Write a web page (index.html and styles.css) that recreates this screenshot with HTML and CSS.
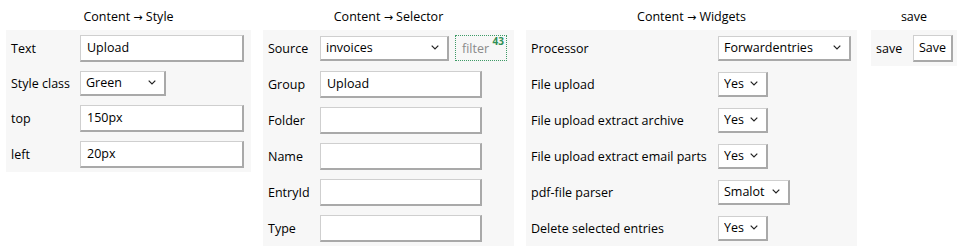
FILE: index.html
```html
<!DOCTYPE html>
<html lang="en">
<head>
  <meta charset="UTF-8">
  <title>Content editor</title>
  <link rel="stylesheet" href="styles.css">
</head>
<body>
  <div class="editor">
    <!-- Style -->
    <section class="panel panel-style">
      <div class="panel-title">Content <span class="arrow">→</span> Style</div>
      <table class="fields">
        <tr>
          <td class="label">Text</td>
          <td><input class="field" type="text" value="Upload"></td>
        </tr>
        <tr class="compact">
          <td class="label">Style class</td>
          <td>
            <select class="choice choice-green">
              <option>Green</option>
            </select>
          </td>
        </tr>
        <tr>
          <td class="label">top</td>
          <td><input class="field" type="text" value="150px"></td>
        </tr>
        <tr>
          <td class="label">left</td>
          <td><input class="field" type="text" value="20px"></td>
        </tr>
      </table>
    </section>

    <!-- Selector -->
    <section class="panel panel-selector">
      <div class="panel-title">Content <span class="arrow">→</span> Selector</div>
      <table class="fields">
        <tr>
          <td class="label">Source</td>
          <td>
            <div class="source-row">
              <select class="choice choice-source">
                <option>invoices</option>
              </select>
              <span class="filter">filter<sup class="count">43</sup></span>
            </div>
          </td>
        </tr>
        <tr>
          <td class="label">Group</td>
          <td><input class="field" type="text" value="Upload"></td>
        </tr>
        <tr>
          <td class="label">Folder</td>
          <td><input class="field" type="text" value=""></td>
        </tr>
        <tr>
          <td class="label">Name</td>
          <td><input class="field" type="text" value=""></td>
        </tr>
        <tr>
          <td class="label">EntryId</td>
          <td><input class="field" type="text" value=""></td>
        </tr>
        <tr>
          <td class="label">Type</td>
          <td><input class="field" type="text" value=""></td>
        </tr>
      </table>
    </section>

    <!-- Widgets -->
    <section class="panel panel-widgets">
      <div class="panel-title">Content <span class="arrow">→</span> Widgets</div>
      <table class="fields">
        <tr>
          <td class="label">Processor</td>
          <td><select class="choice choice-processor"><option>Forwardentries</option></select></td>
        </tr>
        <tr>
          <td class="label">File upload</td>
          <td><select class="choice choice-yes"><option>Yes</option></select></td>
        </tr>
        <tr>
          <td class="label">File upload extract archive</td>
          <td><select class="choice choice-yes"><option>Yes</option></select></td>
        </tr>
        <tr>
          <td class="label">File upload extract email parts</td>
          <td><select class="choice choice-yes"><option>Yes</option></select></td>
        </tr>
        <tr>
          <td class="label">pdf-file parser</td>
          <td><select class="choice choice-parser"><option>Smalot</option></select></td>
        </tr>
        <tr>
          <td class="label">Delete selected entries</td>
          <td><select class="choice choice-yes"><option>Yes</option></select></td>
        </tr>
      </table>
    </section>

    <!-- Save -->
    <section class="panel panel-save">
      <div class="panel-title">save</div>
      <table class="fields">
        <tr>
          <td class="label">save</td>
          <td><button class="save-button" type="button">Save</button></td>
        </tr>
      </table>
    </section>
  </div>
</body>
</html>
```

FILE: styles.css
```css
/* General */
body {
  margin: 0;
  padding: 0 0 0 6px;
  background: #ffffff;
  color: #000000;
  font-family: "Open Sans", "Noto Sans", sans-serif;
  font-size: 12.5px;
}

.editor {
  display: flex;
  align-items: flex-start;
  gap: 12px;
}

/* Panels */
.panel-title {
  height: 30px;
  line-height: 34px;
  text-align: center;
}

.panel-title .arrow {
  font-family: "DejaVu Sans", sans-serif;
  font-size: 11px;
}

.fields {
  border-collapse: collapse;
  background: #f7f7f7;
  width: 100%;
}

.fields td {
  height: 36px;
  padding: 0;
  vertical-align: middle;
}

.fields tr.compact td {
  height: 34px;
}

.fields td.label {
  padding-left: 5px;
  white-space: nowrap;
}

.panel-style { width: 245px; }
.panel-style .label { width: 69px; }

.panel-selector { width: 251px; }
.panel-selector .label { width: 52px; }

.panel-widgets { width: 331px; }
.panel-widgets .label { width: 187px; }

.panel-save { width: 86px; margin-left: 2px; }
.panel-save .label { width: 37px; }

/* Inputs */
.field,
.choice,
.save-button {
  box-sizing: border-box;
  margin: 0;
  font: inherit;
  color: #000000;
  background-color: #ffffff;
  border-style: solid;
  border-width: 1px 2px 2px 1px;
  border-color: #cfcfcf #a9a9a9 #a9a9a9 #cfcfcf;
  border-radius: 0;
  outline: none;
  display: block;
}

.field {
  height: 27px;
  padding: 0 6px;
}

.panel-style .field { width: 164px; }
.panel-selector .field { width: 162px; }

/* Selects */
.choice {
  -webkit-appearance: none;
  appearance: none;
  height: 25px;
  padding: 0 20px 0 5px;
  background-image: url("data:image/svg+xml,%3Csvg xmlns='http://www.w3.org/2000/svg' width='8' height='5' viewBox='0 0 8 5'%3E%3Cpath d='M0.7 0.7 L4 4 L7.3 0.7' fill='none' stroke='%23222' stroke-width='1.2'/%3E%3C/svg%3E");
  background-repeat: no-repeat;
  background-position: right 8px center;
}

.choice-green { width: 86px; }
.choice-source { width: 129px; }
.choice-processor { width: 133px; }
.choice-yes { width: 50px; }
.choice-parser { width: 72px; }

/* Source filter */
.source-row {
  display: flex;
  align-items: center;
  gap: 6px;
}

.filter {
  box-sizing: border-box;
  width: 52px;
  height: 26px;
  padding: 0 0 0 6px;
  border: 1px dotted #3d9a66;
  color: #8a8a8a;
  line-height: 26px;
  position: relative;
}

.filter .count {
  position: absolute;
  top: -8px;
  right: 2px;
  color: #2f8f55;
  font-weight: bold;
  font-size: 10px;
}

/* Save */
.save-button {
  width: 40px;
  height: 27px;
  padding: 0;
  cursor: pointer;
}
```
